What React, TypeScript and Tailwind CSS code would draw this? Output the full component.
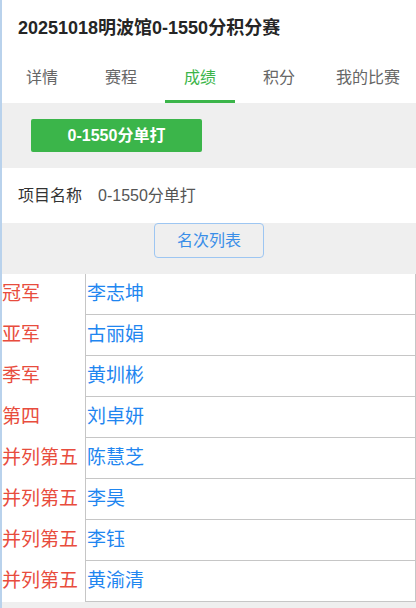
import React from "react";

const ranks = [
  ["冠军", "李志坤"],
  ["亚军", "古丽娟"],
  ["季军", "黄圳彬"],
  ["第四", "刘卓妍"],
  ["并列第五", "陈慧芝"],
  ["并列第五", "李昊"],
  ["并列第五", "李钰"],
  ["并列第五", "黄渝清"],
];

export default function App() {
  return (
    <div
      className="relative w-[416px] h-[608px] bg-[#efefef] overflow-hidden"
      style={{ fontFamily: '"Liberation Sans", "Noto Sans CJK SC", sans-serif' }}
    >
      <div className="absolute left-0 top-0 bottom-0 w-[2px] bg-[#b9d2ec] z-10" />
      <div className="bg-white">
        <div className="h-[56px] flex items-center pl-[18px] text-[18px] font-bold text-[#252525]">
          20251018明波馆0-1550分积分赛
        </div>
        <div className="h-[47px] flex pl-[7px] text-[16px] text-[#666]">
          <div className="w-[70px] flex items-center justify-center border-b-[3px] border-transparent">详情</div>
          <div className="w-[70px] ml-[9px] flex items-center justify-center border-b-[3px] border-transparent">赛程</div>
          <div className="w-[70px] ml-[9px] flex items-center justify-center border-b-[3px] border-[#3bb54a] text-[#3bb54a]">成绩</div>
          <div className="w-[70px] ml-[9px] flex items-center justify-center border-b-[3px] border-transparent">积分</div>
          <div className="ml-[9px] pl-[13px] flex items-center border-b-[3px] border-transparent">我的比赛</div>
        </div>
      </div>
      <div className="h-[65px] flex items-center pl-[31px]">
        <div className="w-[171px] h-[33px] rounded-[2px] bg-[#3bb54a] text-white font-bold text-[16px] flex items-center justify-center">
          0-1550分单打
        </div>
      </div>
      <div className="h-[55px] bg-white flex items-center pl-[18px] text-[16px]">
        <span className="text-[#333]">项目名称</span>
        <span className="ml-[16px] text-[#555]">0-1550分单打</span>
      </div>
      <div className="h-[51px] flex justify-center items-start">
        <div className="w-[110px] h-[35px] ml-[2px] rounded-[4px] border border-[#9dc6f2] text-[#3a8ee8] text-[16px] flex items-center justify-center">
          名次列表
        </div>
      </div>
      <div className="bg-white">
        {ranks.map(([r, n], i) => (
          <div key={i} className="flex h-[41px]">
            <div className="w-[85px] pl-[2px] flex items-center text-[19px] text-[#e84c3d] whitespace-nowrap">
              {r}
            </div>
            <div className="w-[331px] border-l border-r border-b border-[#c6c6c6] pl-[1px] flex items-center text-[19px] text-[#1f86f0]">
              {n}
            </div>
          </div>
        ))}
      </div>
    </div>
  );
}
